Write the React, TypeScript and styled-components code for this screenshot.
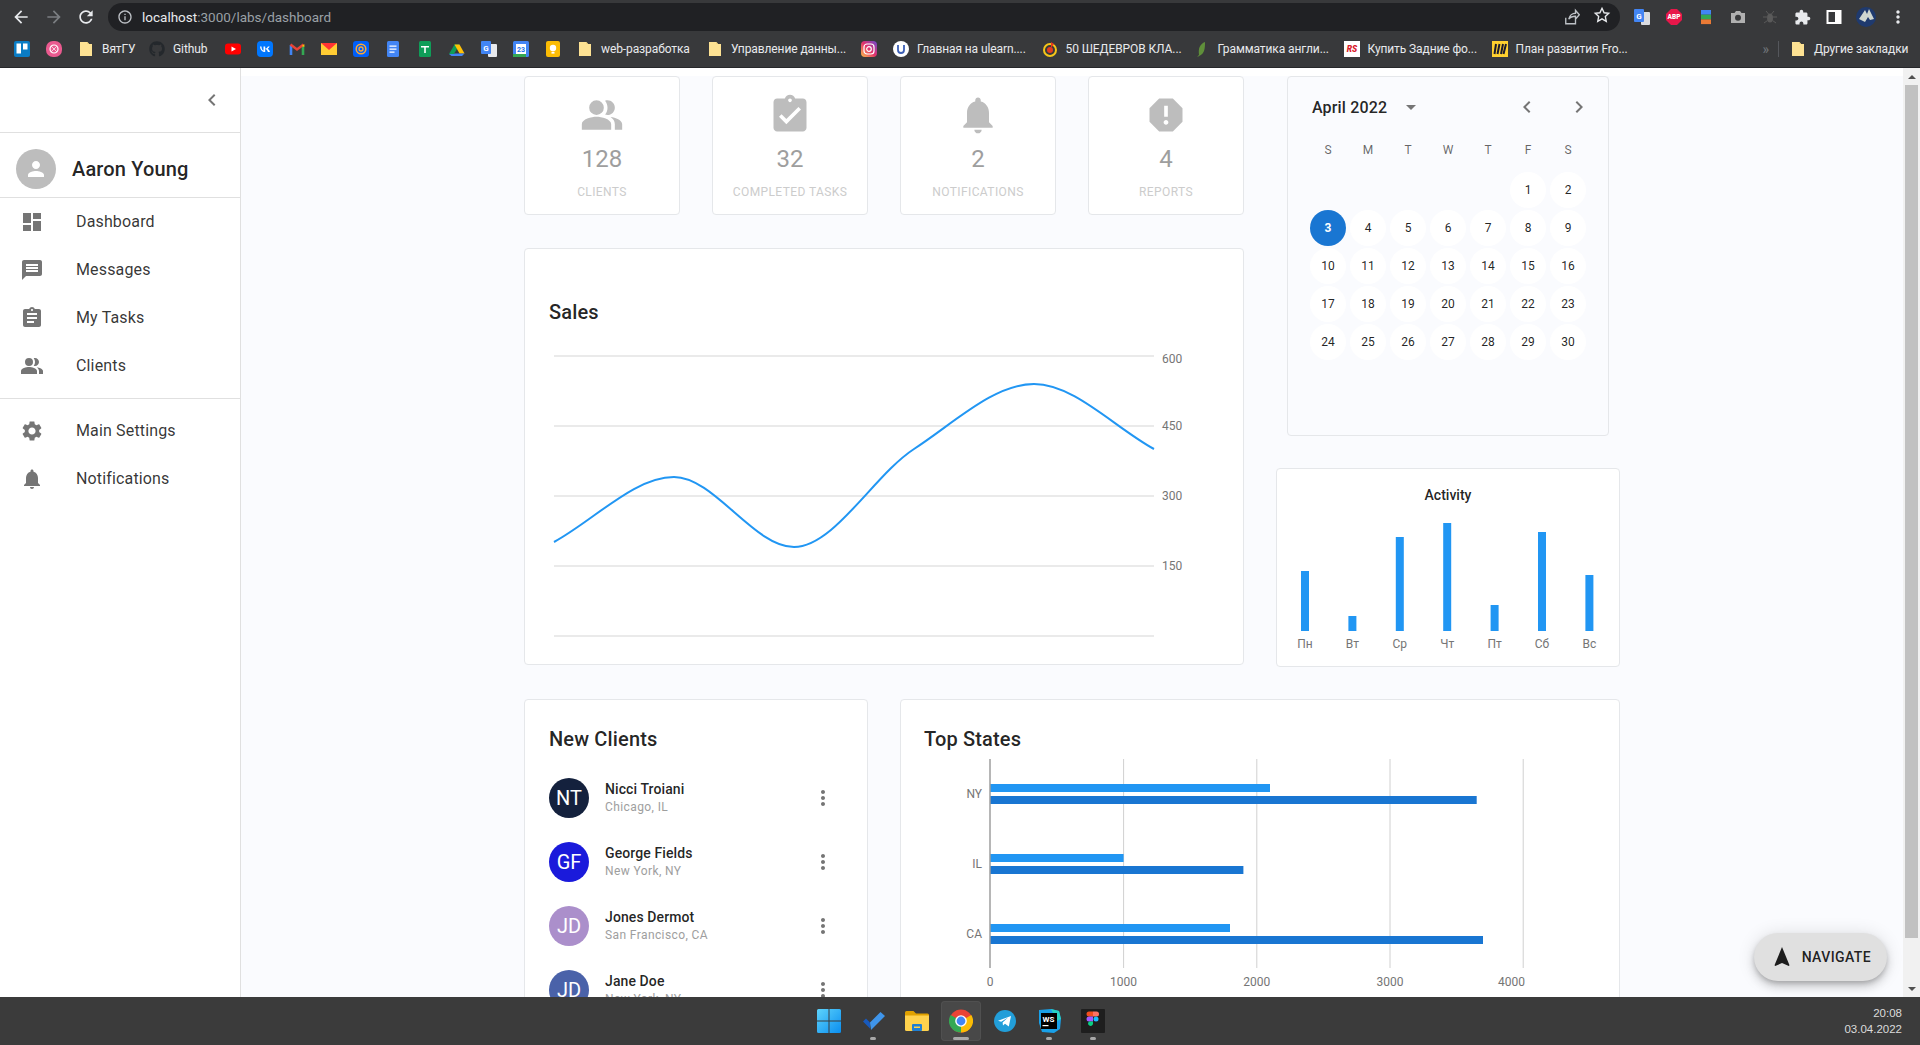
import React from 'react';
import styled, { createGlobalStyle } from 'styled-components';
import { FaGithub } from 'react-icons/fa';

const Global = createGlobalStyle`
  html, body { margin: 0; padding: 0; height: 100%; overflow: hidden; }
  body { font-family: Roboto, "Liberation Sans", sans-serif; color: rgba(0,0,0,.87); }
  #root { height: 100%; }
  * { box-sizing: border-box; }
`;

const P = {
  people: 'M16.67 13.13C18.04 14.06 19 15.32 19 17v3h4v-3c0-2.18-3.57-3.47-6.33-3.87zM9 4a4 4 0 1 0 0 8 4 4 0 0 0 0-8zM15 12c2.21 0 4-1.79 4-4s-1.79-4-4-4c-.47 0-.91.1-1.33.24C14.5 5.27 15 6.58 15 8s-.5 2.73-1.33 3.76c.42.14.86.24 1.33.24zM9 13c-2.67 0-8 1.34-8 4v3h16v-3c0-2.66-5.33-4-8-4z',
  assignment: 'M19 3h-4.18C14.4 1.84 13.3 1 12 1c-1.3 0-2.4.84-2.82 2H5c-1.1 0-2 .9-2 2v14c0 1.1.9 2 2 2h14c1.1 0 2-.9 2-2V5c0-1.1-.9-2-2-2zm-7 0c.55 0 1 .45 1 1s-.45 1-1 1-1-.45-1-1 .45-1 1-1zm2 14H7v-2h7v2zm3-4H7v-2h10v2zm0-4H7V7h10v2z',
  turnedIn: 'M19 3h-4.18C14.4 1.84 13.3 1 12 1c-1.3 0-2.4.84-2.82 2H5c-1.1 0-2 .9-2 2v14c0 1.1.9 2 2 2h14c1.1 0 2-.9 2-2V5c0-1.1-.9-2-2-2zm-7 0c.55 0 1 .45 1 1s-.45 1-1 1-1-.45-1-1 .45-1 1-1zm-2 14l-4-4 1.41-1.41L10 14.17l6.59-6.59L18 9l-8 8z',
  bell: 'M12 22c1.1 0 2-.9 2-2h-4c0 1.1.89 2 2 2zm6-6v-5c0-3.07-1.64-5.64-4.5-6.32V4c0-.83-.67-1.5-1.5-1.5s-1.5.67-1.5 1.5v.68C7.63 5.36 6 7.92 6 11v5l-2 2v1h16v-1l-2-2z',
  report: 'M15.73 3H8.27L3 8.27v7.46L8.27 21h7.46L21 15.73V8.27L15.73 3zM12 17.3c-.72 0-1.3-.58-1.3-1.3 0-.72.58-1.3 1.3-1.3.72 0 1.3.58 1.3 1.3 0 .72-.58 1.3-1.3 1.3zm1-4.3h-2V7h2v6z',
  dashboard: 'M3 13h8V3H3v10zm0 8h8v-6H3v6zm10 0h8V11h-8v10zm0-18v6h8V3h-8z',
  message: 'M20 2H4c-1.1 0-1.99.9-1.99 2L2 22l4-4h14c1.1 0 2-.9 2-2V4c0-1.1-.9-2-2-2zm-2 12H6v-2h12v2zm0-3H6V9h12v2zm0-3H6V6h12v2z',
  settings: 'M19.14 12.94c.04-.3.06-.61.06-.94 0-.32-.02-.64-.07-.94l2.03-1.58c.18-.14.23-.41.12-.61l-1.92-3.32c-.12-.22-.37-.29-.59-.22l-2.39.96c-.5-.38-1.03-.7-1.62-.94l-.36-2.54c-.04-.24-.24-.41-.48-.41h-3.84c-.24 0-.43.17-.47.41l-.36 2.54c-.59.24-1.13.57-1.62.94l-2.39-.96c-.22-.08-.47 0-.59.22L2.74 8.87c-.12.21-.08.47.12.61l2.03 1.58c-.05.3-.09.63-.09.94s.02.64.07.94l-2.03 1.58c-.18.14-.23.41-.12.61l1.92 3.32c.12.22.37.29.59.22l2.39-.96c.5.38 1.03.7 1.62.94l.36 2.54c.05.24.24.41.48.41h3.84c.24 0 .44-.17.47-.41l.36-2.54c.59-.24 1.13-.56 1.62-.94l2.39.96c.22.08.47 0 .59-.22l1.92-3.32c.12-.22.07-.47-.12-.61l-2.01-1.58zM12 15.6c-1.98 0-3.6-1.62-3.6-3.6s1.62-3.6 3.6-3.6 3.6 1.62 3.6 3.6-1.62 3.6-3.6 3.6z',
  navigation: 'M12 2L4.5 20.29l.71.71L12 18l6.79 3 .71-.71z',
  left: 'M15.41 7.41L14 6l-6 6 6 6 1.41-1.41L10.83 12z',
  right: 'M10 6L8.59 7.41 13.17 12l-4.58 4.59L10 18l6-6z',
  more: 'M12 8c1.1 0 2-.9 2-2s-.9-2-2-2-2 .9-2 2 .9 2 2 2zm0 2c-1.1 0-2 .9-2 2s.9 2 2 2 2-.9 2-2-.9-2-2-2zm0 6c-1.1 0-2 .9-2 2s.9 2 2 2 2-.9 2-2-.9-2-2-2z',
  person: 'M12 12c2.21 0 4-1.79 4-4s-1.79-4-4-4-4 1.79-4 4 1.79 4 4 4zm0 2c-2.67 0-8 1.34-8 4v2h16v-2c0-2.66-5.34-4-8-4z',
  drop: 'M7 10l5 5 5-5z',
  back: 'M20 11H7.83l5.59-5.59L12 4l-8 8 8 8 1.41-1.41L7.83 13H20v-2z',
  forward: 'M12 4l-1.41 1.41L16.17 11H4v2h12.17l-5.58 5.59L12 20l8-8z',
  reload: 'M17.65 6.35C16.2 4.9 14.21 4 12 4c-4.42 0-7.99 3.58-7.99 8s3.57 8 7.99 8c3.73 0 6.84-2.55 7.73-6h-2.08c-.82 2.33-3.04 4-5.65 4-3.31 0-6-2.69-6-6s2.69-6 6-6c1.66 0 3.14.69 4.22 1.78L13 11h7V4l-2.35 2.35z',
  info: 'M11 7h2v2h-2zm0 4h2v6h-2zm1-9C6.48 2 2 6.48 2 12s4.48 10 10 10 10-4.48 10-10S17.52 2 12 2zm0 18c-4.41 0-8-3.59-8-8s3.59-8 8-8 8 3.59 8 8-3.59 8-8 8z',
  puzzle: 'M20.5 11H19V7c0-1.1-.9-2-2-2h-4V3.5C13 2.12 11.88 1 10.5 1S8 2.12 8 3.5V5H4c-1.1 0-1.99.9-1.99 2v3.8H3.5c1.49 0 2.7 1.21 2.7 2.7s-1.21 2.7-2.7 2.7H2V20c0 1.1.9 2 2 2h3.8v-1.5c0-1.49 1.21-2.7 2.7-2.7 1.49 0 2.7 1.21 2.7 2.7V22H17c1.1 0 2-.9 2-2v-4h1.5c1.38 0 2.5-1.12 2.5-2.5S21.88 11 20.5 11z',
};

const IconSvg = styled.svg<{ $size: number; $color: string }>`
  width: ${p => p.$size}px;
  height: ${p => p.$size}px;
  fill: ${p => p.$color};
  flex: none;
  display: block;
`;
const Mi = ({ d, size = 24, color = '#757575' }: { d: string; size?: number; color?: string }) => (
  <IconSvg $size={size} $color={color} viewBox="0 0 24 24"><path d={d} /></IconSvg>
);
const Logo = styled.svg<{ $size?: number }>`
  width: ${p => p.$size ?? 16}px;
  height: ${p => p.$size ?? 16}px;
  flex: none;
  display: block;
`;

/* ---------- small logos ---------- */
const L = {
  trello: <Logo viewBox="0 0 16 16"><rect width="16" height="16" rx="2" fill="#0a7cc4" /><rect x="2.5" y="2.5" width="4.5" height="10" fill="#fff" /><rect x="9" y="2.5" width="4.5" height="6" fill="#fff" /></Logo>,
  pink: <Logo viewBox="0 0 16 16"><rect width="16" height="16" rx="7" fill="#ea5a8f" /><circle cx="8" cy="8" r="4" fill="none" stroke="#fff" strokeWidth="1.2" /><path d="M5 5l6 6M11 5l-6 6" stroke="#fff" strokeWidth=".7" /></Logo>,
  folder: <Logo viewBox="0 0 16 16"><path d="M2 1h7.500L11 3h3v12H2z" fill="#fde293" /><path d="M9.500 1L11 3H9.500z" fill="#e5c76b" /></Logo>,
  github: <FaGithub size={16} color="#24282c" style={{ flex: 'none' }} />,
  youtube: <Logo viewBox="0 0 16 16"><rect y="2.500" width="16" height="11" rx="3" fill="#f00" /><path d="M6.500 5.500v5L11 8z" fill="#fff" /></Logo>,
  vk: <Logo viewBox="0 0 16 16"><rect width="16" height="16" rx="4" fill="#07f" /><path d="M3 5.500c.2 3.500 2 5.500 5.200 5.500V8c1.300.2 2.200 1.300 2.700 3H13c-.5-1.800-1.500-2.800-2.300-3.300.7-.5 1.500-1.300 2-2.200h-1.800c-.4 1-1.500 2-2.700 2.200V5.500H6.500v4.200C5.500 9.500 4.600 8 4.500 5.500z" fill="#fff" /></Logo>,
  gmail: <Logo viewBox="0 0 16 16"><path d="M2 14V4" stroke="#4285f4" strokeWidth="2.600" /><path d="M14 14V4" stroke="#34a853" strokeWidth="2.600" /><path d="M1.500 3.500L8 8.500l6.500-5" fill="none" stroke="#ea4335" strokeWidth="2.400" /><path d="M12.700 5l2.600-2v3z" fill="#fbbc04" /></Logo>,
  ymail: <Logo viewBox="0 0 16 16"><rect y="2" width="16" height="12" fill="#fc3" /><path d="M0 2h16L8 9z" fill="#f33" /></Logo>,
  at: <Logo viewBox="0 0 16 16"><rect width="16" height="16" rx="3" fill="#005ff9" /><circle cx="8" cy="8" r="4.800" fill="none" stroke="#ffa930" strokeWidth="1.500" /><circle cx="8" cy="8" r="2" fill="none" stroke="#ffa930" strokeWidth="1.300" /></Logo>,
  docs: <Logo viewBox="0 0 16 16"><rect x="2" width="12" height="16" rx="1.500" fill="#4285f4" /><path d="M4.500 4.500h7v1.200h-7zM4.500 7.500h7v1.200h-7zM4.500 10.500h5v1.200h-5z" fill="#fff" /></Logo>,
  sheets: <Logo viewBox="0 0 16 16"><rect x="2" width="12" height="16" rx="1.500" fill="#0f9d58" /><path d="M4 5h8v1.500H8.800V12H7.200V6.500H4z" fill="#fff" /></Logo>,
  drive: <Logo viewBox="0 0 16 16"><path d="M5.500 1.500h5L5 11H0z" fill="#0f9d58" transform="translate(0 2)" /><path d="M5.500 1.500h5l5 9h-5z" fill="#ffc107" transform="translate(0 2)" /><path d="M0 13h5l.5-.5h10l-2.500 2.500H2.500z" fill="#4285f4" /></Logo>,
  translate: <Logo viewBox="0 0 16 16"><rect x="7" y="3" width="9" height="13" rx="1" fill="#e8eaed" /><rect width="10" height="13" rx="1" fill="#4285f4" /><text x="5" y="9.500" fontSize="8" fontWeight="700" textAnchor="middle" fill="#fff" fontFamily="Roboto">G</text></Logo>,
  cal: <Logo viewBox="0 0 16 16"><rect width="16" height="16" rx="1.500" fill="#4285f4" /><rect x="3" y="3" width="10" height="10" fill="#fff" /><rect y="13" width="13" height="3" fill="#34a853" /><text x="8" y="11" fontSize="7" fontWeight="700" textAnchor="middle" fill="#1a73e8" fontFamily="Roboto">23</text></Logo>,
  keep: <Logo viewBox="0 0 16 16"><rect x="1" width="14" height="16" rx="2" fill="#fbbc04" /><circle cx="8" cy="7" r="3.200" fill="#fff" /><rect x="6.500" y="10.800" width="3" height="1.800" fill="#fff" /></Logo>,
  insta: <Logo viewBox="0 0 16 16"><defs><linearGradient id="ig" x1="0" y1="1" x2="1" y2="0"><stop offset="0" stopColor="#fdc14a" /><stop offset=".5" stopColor="#e1306c" /><stop offset="1" stopColor="#6a4bd1" /></linearGradient></defs><rect width="16" height="16" rx="4" fill="url(#ig)" /><rect x="3" y="3" width="10" height="10" rx="3" fill="none" stroke="#fff" strokeWidth="1.200" /><circle cx="8" cy="8" r="2.300" fill="none" stroke="#fff" strokeWidth="1.200" /></Logo>,
  ulearn: <Logo viewBox="0 0 16 16"><circle cx="8" cy="8" r="8" fill="#fff" /><path d="M5 4v5a3 3 0 0 0 6 0V4" fill="none" stroke="#3c5fb5" strokeWidth="1.800" /></Logo>,
  fifty: <Logo viewBox="0 0 16 16"><circle cx="8" cy="9" r="6" fill="none" stroke="#f5c518" strokeWidth="2" /><circle cx="8" cy="9" r="3" fill="#e53a1e" /><path d="M9 1l3 2-3 4z" fill="#e53a1e" /></Logo>,
  leaf: <Logo viewBox="0 0 16 16"><path d="M11 1C6 3 4 7 5 14c-1 .8-1.500 1.300-1.500 2 2-1.500 5-2 6.500-6 1-3 1-6 1-9z" fill="#5f8f3a" /></Logo>,
  rs: <Logo viewBox="0 0 16 16"><rect width="16" height="16" fill="#fff" /><text x="8" y="11" fontSize="8.500" fontWeight="900" fontStyle="italic" textAnchor="middle" fill="#d9192a" fontFamily="Roboto">RS</text></Logo>,
  miro: <Logo viewBox="0 0 16 16"><rect width="16" height="16" fill="#ffd02f" /><path d="M4 3L2.500 13M7.500 3L5.500 13M11 3L9 13M14 3l-2.500 10" stroke="#1a1a2e" strokeWidth="2" /></Logo>,
};

const E = {
  translate: <Logo viewBox="0 0 16 16"><rect x="7" y="3" width="9" height="13" rx="1" fill="#dadce0" /><rect width="10" height="13" rx="1" fill="#4285f4" /><text x="5" y="9.500" fontSize="8" fontWeight="700" textAnchor="middle" fill="#fff" fontFamily="Roboto">G</text></Logo>,
  abp: <Logo viewBox="0 0 16 16"><path d="M5 0h6l5 5v6l-5 5H5l-5-5V5z" fill="#e8174a" /><text x="8" y="10.300" fontSize="6.500" fontWeight="900" textAnchor="middle" fill="#fff" fontFamily="Roboto">ABP</text></Logo>,
  color: <Logo viewBox="0 0 16 16"><rect x="3" y="1" width="10" height="4.700" fill="#4285f4" /><rect x="3" y="5.700" width="10" height="4.700" fill="#34a853" /><rect x="3" y="10.400" width="10" height="4.700" fill="#ea7a35" /></Logo>,
  camera: <Logo viewBox="0 0 16 16"><path d="M1 4h3.500L6 2h4l1.500 2H15v10H1z" fill="#b0b0b0" /><circle cx="8" cy="8.700" r="3" fill="#38393b" /></Logo>,
  bug: <Logo viewBox="0 0 16 16"><ellipse cx="8" cy="9" rx="3" ry="4.500" fill="#5a5a5a" /><path d="M4 2l2.500 3M12 2L9.500 5M1 8h4M11 8h4M2 14l3.500-2.500M14 14l-3.500-2.500" stroke="#5a5a5a" fill="none" /></Logo>,
  panel: <Logo viewBox="0 0 16 16"><rect x="1.500" y="2" width="13" height="12" fill="none" stroke="#fff" strokeWidth="2" /><rect x="9" y="2" width="5" height="12" fill="#fff" /></Logo>,
  avatar: <Logo $size={20} viewBox="0 0 20 20"><defs><clipPath id="av"><circle cx="10" cy="10" r="10" /></clipPath></defs><g clipPath="url(#av)"><rect width="20" height="20" fill="#1f3a6e" /><path d="M3 12L9 3l2 4 2-5 5 10-4 1-2-3-3 5z" fill="#cfd6cf" /></g></Logo>,
};

/* ---------- browser chrome ---------- */
const Chrome = styled.header`
  background: #38393b;
  flex: none;
  height: 68px;
  border-bottom: 1px solid #26272a;
`;
const Toolbar = styled.div`
  height: 33px;
  padding: 3px 6px 2px 5px;
  display: flex;
  align-items: center;
`;
const NavBtn = styled.div<{ $gap?: number }>`
  width: 32px;
  height: 28px;
  margin-right: ${p => p.$gap ?? 0}px;
  display: flex;
  align-items: center;
  justify-content: center;
  flex: none;
`;
const UrlPill = styled.div`
  flex: 1;
  height: 28px;
  background: #202124;
  border-radius: 14px;
  display: flex;
  align-items: center;
  padding: 0 9px 0 9px;
  margin: 0 6px 0 0;
`;
const UrlText = styled.span`
  margin-left: 9px;
  font-size: 13.5px;
  color: #9aa0a6;
  flex: 1;
  b { font-weight: 400; color: #e8eaed; }
`;
const PillIcon = styled.div`
  margin-left: 13px;
`;
const BookmarkBar = styled.div`
  height: 34px;
  padding: 0 7px 2px 6px;
  display: flex;
  align-items: center;
`;
const Bm = styled.div`
  display: flex;
  align-items: center;
  gap: 8px;
  padding: 0 8px;
  flex: none;
`;
const BmLabel = styled.span<{ $w: number }>`
  width: ${p => p.$w}px;
  font-size: 12px;
  letter-spacing: -.1px;
  color: #e8eaed;
  white-space: nowrap;
`;
const BmRight = styled.div`
  margin-left: auto;
  display: flex;
  align-items: center;
`;
const Overflow = styled.span`
  color: #70757a;
  font-size: 14px;
  margin-right: 9px;
`;
const BmSep = styled.div`
  width: 1px;
  height: 16px;
  background: #55575c;
  margin-right: 3px;
`;

const bookmarks: { icon: React.ReactNode; label?: string; w?: number }[] = [
  { icon: L.trello }, { icon: L.pink }, { icon: L.folder, label: 'ВятГУ', w: 31 },
  { icon: L.github, label: 'Github', w: 36 }, { icon: L.youtube }, { icon: L.vk }, { icon: L.gmail },
  { icon: L.ymail }, { icon: L.at }, { icon: L.docs }, { icon: L.sheets }, { icon: L.drive },
  { icon: L.translate }, { icon: L.cal }, { icon: L.keep },
  { icon: L.folder, label: 'web-разработка', w: 90 },
  { icon: L.folder, label: 'Управление данны...', w: 114 },
  { icon: L.insta }, { icon: L.ulearn, label: 'Главная на ulearn....', w: 108.5 },
  { icon: L.fifty, label: '50 ШЕДЕВРОВ КЛА...', w: 112 },
  { icon: L.leaf, label: 'Грамматика англи...', w: 110 },
  { icon: L.rs, label: 'Купить Задние фо...', w: 108 },
  { icon: L.miro, label: 'План развития Fro...', w: 110 },
];

/* ---------- layout ---------- */
const Window = styled.div`
  width: 100vw;
  height: 100vh;
  display: flex;
  flex-direction: column;
  overflow: hidden;
`;
const Body = styled.div`
  flex: 1;
  min-height: 0;
  display: flex;
  position: relative;
  background: #fff;
`;
const Sidebar = styled.aside`
  width: 241px;
  flex: none;
  background: #fff;
  border-right: 1px solid #e0e0e0;
`;
const CollapseRow = styled.div`
  height: 65px;
  border-bottom: 1px solid #e0e0e0;
  display: flex;
  align-items: flex-start;
  justify-content: flex-end;
  padding: 20px 16px 0 0;
`;
const Profile = styled.div`
  height: 65px;
  border-bottom: 1px solid #e0e0e0;
  padding: 16px 16px 8px;
  display: flex;
  align-items: center;
  gap: 16px;
`;
const UserAvatar = styled.div`
  width: 40px;
  height: 40px;
  border-radius: 50%;
  background: #bdbdbd;
  display: flex;
  align-items: center;
  justify-content: center;
`;
const UserName = styled.span`
  font-size: 20px;
  font-weight: 500;
  letter-spacing: .15px;
`;
const MenuGroup = styled.nav<{ $first?: boolean }>`
  padding: ${p => (p.$first ? '0 0 8px' : '8px 0')};
  border-bottom: ${p => (p.$first ? '1px solid #e0e0e0' : 'none')};
`;
const MenuItem = styled.div`
  height: 48px;
  padding: 0 0 0 20px;
  display: flex;
  align-items: center;
  gap: 32px;
  font-size: 16px;
  letter-spacing: .15px;
  color: rgba(0,0,0,.8);
`;
const MenuLabel = styled.span`
  margin-bottom: 2px;
`;
const Main = styled.main`
  flex: 1;
  min-width: 0;
  overflow: hidden;
  background: #fafbfe;
`;
const TopBand = styled.div`
  height: 8px;
  background: #fff;
`;
const Content = styled.div`
  width: 1096px;
  margin: 0 auto;
`;
const TopGrid = styled.div`
  display: grid;
  grid-template-columns: 720px 344px;
  column-gap: 32px;
`;
const BottomGrid = styled.div`
  display: grid;
  grid-template-columns: 344px 720px;
  column-gap: 32px;
  margin-top: 32px;
`;
const LeftCol = styled.div``;
const RightCol = styled.div`
  display: flex;
  flex-direction: column;
  align-items: center;
  gap: 32px;
`;
const Card = styled.section`
  background: #fff;
  border: 1px solid #e5e7ea;
  border-radius: 4px;
`;
const StatRow = styled.div`
  display: grid;
  grid-template-columns: repeat(4, 1fr);
  gap: 32px;
  margin-bottom: 33px;
`;
const StatCard = styled(Card)`
  height: 139px;
  padding-top: 16px;
  display: flex;
  flex-direction: column;
  align-items: center;
`;
const StatValue = styled.div`
  margin-top: 8px;
  font-size: 24px;
  line-height: 28px;
  color: #9e9e9e;
`;
const StatLabel = styled.div`
  margin-top: 10px;
  font-size: 12px;
  line-height: 18px;
  color: #ccc;
  letter-spacing: .4px;
  text-transform: uppercase;
`;
const CardTitle = styled.h2`
  margin: 0;
  font-size: 20px;
  line-height: 24px;
  font-weight: 500;
  letter-spacing: .15px;
`;
const SalesCard = styled(Card)`
  height: 417px;
  padding: 51px 0 0 24px;
`;
const ChartSvg = styled.svg<{ $w: number; $h: number; $mt?: number }>`
  display: block;
  width: ${p => p.$w}px;
  height: ${p => p.$h}px;
  margin-top: ${p => p.$mt ?? 0}px;
  font-family: Roboto, sans-serif;
  font-size: 12px;
  text { fill: #757575; }
`;

/* ---------- calendar ---------- */
const CalendarCard = styled.section`
  width: 322px;
  height: 360px;
  border: 1px solid #e5e7ea;
  border-radius: 4px;
  padding: 15px 20px 0;
`;
const CalHeader = styled.div`
  height: 30px;
  display: flex;
  align-items: center;
  padding-left: 4px;
`;
const MonthLabel = styled.span`
  font-size: 16px;
  font-weight: 500;
  letter-spacing: .15px;
  width: 76px;
  white-space: nowrap;
  margin-right: 11px;
`;
const CalNav = styled.div`
  margin-left: auto;
  margin-right: -3px;
  display: flex;
  gap: 28px;
`;
const CalGrid = styled.div<{ $rows?: boolean }>`
  display: grid;
  grid-template-columns: repeat(7, 40px);
  margin-top: ${p => (p.$rows ? 9 : 16)}px;
  grid-auto-rows: ${p => (p.$rows ? 38 : 24)}px;
`;
const WeekDay = styled.div`
  display: flex;
  align-items: center;
  justify-content: center;
  font-size: 12px;
  color: rgba(0,0,0,.6);
`;
const DayCell = styled.div<{ $sel?: boolean }>`
  width: 36px;
  height: 36px;
  margin: 1px 2px;
  border-radius: 50%;
  display: flex;
  align-items: center;
  justify-content: center;
  font-size: 12px;
  background: ${p => (p.$sel ? '#1976d2' : '#fff')};
  color: ${p => (p.$sel ? '#fff' : 'rgba(0,0,0,.87)')};
  font-weight: ${p => (p.$sel ? 700 : 400)};
`;

/* ---------- activity ---------- */
const ActivityCard = styled(Card)`
  width: 344px;
  height: 199px;
  padding-top: 18px;
`;
const ActivityTitle = styled.h3`
  margin: 0 0 7px;
  font-size: 14px;
  line-height: 16px;
  font-weight: 500;
  text-align: center;
`;

/* ---------- clients ---------- */
const ClientsCard = styled(Card)`
  height: 340px;
  padding: 27px 32px 0 24px;
`;
const ClientList = styled.div`
  margin-top: 15px;
`;
const ClientRow = styled.div`
  height: 64px;
  display: flex;
  align-items: center;
`;
const ClientAvatar = styled.div<{ $bg: string }>`
  width: 40px;
  height: 40px;
  border-radius: 50%;
  background: ${p => p.$bg};
  color: #fff;
  font-size: 20px;
  display: flex;
  align-items: center;
  justify-content: center;
  flex: none;
`;
const ClientText = styled.div`
  margin: 0 0 3px 16px;
  flex: 1;
`;
const ClientName = styled.div`
  font-size: 14px;
  line-height: 20px;
  font-weight: 500;
  letter-spacing: .1px;
`;
const ClientCity = styled.div`
  font-size: 12px;
  line-height: 16px;
  letter-spacing: .4px;
  color: #9e9e9e;
`;
const StatesCard = styled(Card)`
  height: 340px;
  padding: 27px 0 0 23px;
`;

/* ---------- scrollbar + fab ---------- */
const Scrollbar = styled.div`
  width: 17px;
  flex: none;
  background: #f1f1f1;
  display: flex;
  flex-direction: column;
`;
const ScrollArrow = styled.div<{ $up?: boolean }>`
  height: 17px;
  display: flex;
  align-items: center;
  justify-content: center;
  flex: none;
  &::before {
    content: '';
    border-left: 4px solid transparent;
    border-right: 4px solid transparent;
    ${p => (p.$up ? 'border-bottom: 4px solid #505050;' : 'border-top: 4px solid #505050;')}
  }
`;
const ScrollThumb = styled.div`
  height: 853px;
  margin: 0 2px;
  background: #c1c1c1;
  flex: none;
`;
const ScrollTrack = styled.div`
  flex: 1;
`;
const Fab = styled.button`
  position: absolute;
  right: 33px;
  bottom: 16px;
  height: 48px;
  border: 0;
  border-radius: 24px;
  background: #e0e0e0;
  padding: 0 16px;
  display: flex;
  align-items: center;
  gap: 8px;
  font-family: Roboto, sans-serif;
  font-size: 14px;
  font-weight: 500;
  letter-spacing: .4px;
  color: rgba(0,0,0,.87);
  box-shadow: 0 3px 5px -1px rgba(0,0,0,.2), 0 6px 10px 0 rgba(0,0,0,.14), 0 1px 18px 0 rgba(0,0,0,.12);
`;

/* ---------- taskbar ---------- */
const Taskbar = styled.footer`
  height: 48px;
  flex: none;
  background: #3b3b3b;
  display: grid;
  grid-template-columns: 1fr auto 1fr;
  align-items: center;
`;
const TaskApps = styled.div`
  grid-column: 2;
  display: flex;
  gap: 4px;
  padding-left: 1px;
`;
const TaskApp = styled.div<{ $active?: boolean }>`
  width: 40px;
  height: 40px;
  border-radius: 4px;
  position: relative;
  display: flex;
  align-items: center;
  justify-content: center;
  background: ${p => (p.$active ? '#484848' : 'transparent')};
  box-shadow: ${p => (p.$active ? 'inset 0 0 0 1px #505050' : 'none')};
`;
const TaskDot = styled.span<{ $wide?: boolean }>`
  position: absolute;
  bottom: 1px;
  left: 50%;
  transform: translateX(-50%);
  width: ${p => (p.$wide ? 16 : 6)}px;
  height: 3px;
  border-radius: 2px;
  background: #a8a8a8;
`;
const Clock = styled.div`
  justify-self: end;
  padding-right: 18px;
  font-family: "Liberation Sans", sans-serif;
  font-size: 11.5px;
  line-height: 16px;
  text-align: right;
  color: #dcdcdc;
`;

const T = {
  windows: <Logo $size={24} viewBox="0 0 24 24"><defs><linearGradient id="win" x1="0" y1="0" x2="1" y2="1"><stop offset="0" stopColor="#5ed3fb" /><stop offset="1" stopColor="#0a8ef0" /></linearGradient></defs><path d="M0 1.500A1.500 1.500 0 0 1 1.500 0h10v11.500H0zM12.500 0h10A1.500 1.500 0 0 1 24 1.500v10H12.500zM0 12.500h11.500V24h-10A1.500 1.500 0 0 1 0 22.500zM12.500 12.500H24v10a1.500 1.500 0 0 1-1.500 1.500h-10z" fill="url(#win)" /></Logo>,
  todo: <Logo $size={24} viewBox="0 0 24 24"><path d="M9 19.500L2 12.500l3-3 4 4z" fill="#185abd" /><path d="M9 13.500L19.500 3 24 7 10 21z" fill="#3f95ea" /></Logo>,
  folder: <Logo $size={24} viewBox="0 0 24 24"><path d="M0 3.500A1.500 1.500 0 0 1 1.500 2h7L11 4.500h11.500A1.500 1.500 0 0 1 24 6v4H0z" fill="#e0a100" /><path d="M0 6.500h24v14A1.500 1.500 0 0 1 22.500 22h-21A1.500 1.500 0 0 1 0 20.500z" fill="#ffd24d" /><rect x="7" y="15" width="10" height="7" rx="1" fill="#1f7fd4" /><rect x="9" y="17.500" width="6" height="1.500" fill="#ffd24d" /></Logo>,
  chrome: <Logo $size={24} viewBox="0 0 24 24"><circle cx="12" cy="12" r="11.500" fill="#ea4335" /><path d="M12 12L22.300 6A11.500 11.500 0 0 1 12 23.500z" fill="#fbbc04" /><path d="M12 12L12 23.500A11.500 11.500 0 0 1 1.700 6z" fill="#34a853" /><circle cx="12" cy="12" r="5.800" fill="#fff" /><circle cx="12" cy="12" r="4.400" fill="#4285f4" /></Logo>,
  telegram: <Logo $size={24} viewBox="0 0 24 24"><circle cx="12" cy="12" r="11" fill="#229ed9" /><path d="M5 11.800L18 7l-2.200 10.500-3.800-2.800-2 1.900-.4-3.200 5.400-4.800-6.800 4.200z" fill="#fff" /></Logo>,
  ws: <Logo $size={24} viewBox="0 0 24 24"><path d="M2 1l12-1 8 2 2 8-1 10-6 4-12-1-3-9z" fill="#19a0e8" /><path d="M14 0l8 2 2 8-4 2z" fill="#27d3c3" /><rect x="4" y="4" width="16" height="16" fill="#000" /><text x="5.500" y="12.500" fontSize="8" fontWeight="700" fill="#fff" fontFamily="Roboto">WS</text><rect x="5.500" y="16" width="6" height="1.200" fill="#fff" /></Logo>,
  figma: <Logo $size={24} viewBox="0 0 24 24"><rect width="24" height="24" rx="1" fill="#1e1e1e" /><path d="M8 2.500h4v5H8a2.500 2.500 0 0 1 0-5z" fill="#f24e1e" /><path d="M12 2.500h3.500a2.500 2.500 0 0 1 0 5H12z" fill="#ff7262" /><path d="M8 7.500h4v5H8a2.500 2.500 0 0 1 0-5z" fill="#a259ff" /><circle cx="15" cy="10" r="2.500" fill="#1abcfe" /><path d="M8 12.500h4V15a2.500 2.500 0 1 1-4-2.500z" fill="#0acf83" /></Logo>,
};

const stats = [
  { icon: P.people, value: '128', label: 'Clients' },
  { icon: P.turnedIn, value: '32', label: 'Completed Tasks' },
  { icon: P.bell, value: '2', label: 'Notifications' },
  { icon: P.report, value: '4', label: 'Reports' },
];
const clients = [
  { ini: 'NT', bg: '#14213d', name: 'Nicci Troiani', city: 'Chicago, IL' },
  { ini: 'GF', bg: '#1a1adb', name: 'George Fields', city: 'New York, NY' },
  { ini: 'JD', bg: '#ab8fcb', name: 'Jones Dermot', city: 'San Francisco, CA' },
  { ini: 'JD', bg: '#4a62a9', name: 'Jane Doe', city: 'New York, NY' },
];
const activity = [
  { x: 1305, h: 60, t: 'Пн' }, { x: 1352.4, h: 15, t: 'Вт' }, { x: 1399.8, h: 94, t: 'Ср' },
  { x: 1447.2, h: 108, t: 'Чт' }, { x: 1494.6, h: 26, t: 'Пт' }, { x: 1542, h: 99, t: 'Сб' },
  { x: 1589.4, h: 56, t: 'Вс' },
];
const states = [
  { t: 'NY', y: 784, a: 1270, b: 1476.7 },
  { t: 'IL', y: 854, a: 1123.6, b: 1243.4 },
  { t: 'CA', y: 924, a: 1230, b: 1483 },
];
const days: (number | null)[] = [null, null, null, null, null, ...Array.from({ length: 30 }, (_, i) => i + 1)];

export default function App() {
  return (
    <Window>
      <Global />
      <Chrome>
        <Toolbar>
          <NavBtn $gap={1}><Mi d={P.back} size={20} color="#e8eaed" /></NavBtn>
          <NavBtn $gap={0}><Mi d={P.forward} size={20} color="#7b7e82" /></NavBtn>
          <NavBtn $gap={6}><Mi d={P.reload} size={20} color="#e8eaed" /></NavBtn>
          <UrlPill>
            <Mi d={P.info} size={16} color="#bdc1c6" />
            <UrlText><b>localhost</b>:3000/labs/dashboard</UrlText>
            <svg width="18" height="18" viewBox="0 0 24 24" fill="none" stroke="#bdc1c6" strokeWidth="1.800"><path d="M5 13v8h13v-6M9 15c1-5 5-8 9-8V3l5 6-5 6v-4c-4 0-7 1-9 4z" /></svg>
            <PillIcon><svg width="18" height="18" viewBox="0 0 24 24" fill="none" stroke="#e8eaed" strokeWidth="1.800"><path d="M12 3l2.800 6 6.200.7-4.600 4.300 1.300 6.500L12 17.200l-5.700 3.300 1.300-6.500L3 9.700 9.200 9z" /></svg></PillIcon>
          </UrlPill>
          <NavBtn>{E.translate}</NavBtn>
          <NavBtn>{E.abp}</NavBtn>
          <NavBtn>{E.color}</NavBtn>
          <NavBtn>{E.camera}</NavBtn>
          <NavBtn>{E.bug}</NavBtn>
          <NavBtn><Mi d={P.puzzle} size={17} color="#e8eaed" /></NavBtn>
          <NavBtn>{E.panel}</NavBtn>
          <NavBtn>{E.avatar}</NavBtn>
          <NavBtn><Mi d={P.more} size={20} color="#e8eaed" /></NavBtn>
        </Toolbar>
        <BookmarkBar>
          {bookmarks.map((b, i) => (
            <Bm key={i}>
              {b.icon}
              {b.label && <BmLabel $w={b.w!}>{b.label}</BmLabel>}
            </Bm>
          ))}
          <BmRight>
            <Overflow>»</Overflow>
            <BmSep />
            <Bm>{L.folder}<BmLabel $w={91}>Другие закладки</BmLabel></Bm>
          </BmRight>
        </BookmarkBar>
      </Chrome>

      <Body>
        <Sidebar>
          <CollapseRow><Mi d={P.left} /></CollapseRow>
          <Profile>
            <UserAvatar><Mi d={P.person} color="#fff" /></UserAvatar>
            <UserName>Aaron Young</UserName>
          </Profile>
          <MenuGroup $first>
            <MenuItem><Mi d={P.dashboard} /><MenuLabel>Dashboard</MenuLabel></MenuItem>
            <MenuItem><Mi d={P.message} /><MenuLabel>Messages</MenuLabel></MenuItem>
            <MenuItem><Mi d={P.assignment} /><MenuLabel>My Tasks</MenuLabel></MenuItem>
            <MenuItem><Mi d={P.people} /><MenuLabel>Clients</MenuLabel></MenuItem>
          </MenuGroup>
          <MenuGroup>
            <MenuItem><Mi d={P.settings} /><MenuLabel>Main Settings</MenuLabel></MenuItem>
            <MenuItem><Mi d={P.bell} /><MenuLabel>Notifications</MenuLabel></MenuItem>
          </MenuGroup>
        </Sidebar>

        <Main>
          <TopBand />
          <Content>
            <TopGrid>
              <LeftCol>
                <StatRow>
                  {stats.map(s => (
                    <StatCard key={s.label}>
                      <Mi d={s.icon} size={44} color="#bdbdbd" />
                      <StatValue>{s.value}</StatValue>
                      <StatLabel>{s.label}</StatLabel>
                    </StatCard>
                  ))}
                </StatRow>
                <SalesCard>
                  <CardTitle>Sales</CardTitle>
                  <ChartSvg $w={672} $h={320} $mt={16} viewBox="549 340 672 320">
                    {[356, 426, 496, 566, 636].map(y => (
                      <line key={y} x1="554" x2="1154" y1={y} y2={y} stroke="#e3e3e3" strokeWidth="1.500" />
                    ))}
                    <text x="1162" y="363">600</text>
                    <text x="1162" y="430">450</text>
                    <text x="1162" y="500">300</text>
                    <text x="1162" y="570">150</text>
                    <path d="M554 542C594 520.300 634 477 674 477C714 477 754 547 794 547C834 547 874 475 914 449C954 423 994 384 1034 384C1074 384 1114 427 1154 449" fill="none" stroke="#2196f3" strokeWidth="2" />
                  </ChartSvg>
                </SalesCard>
              </LeftCol>
              <RightCol>
                <CalendarCard>
                  <CalHeader>
                    <MonthLabel>April 2022</MonthLabel>
                    <Mi d={P.drop} />
                    <CalNav>
                      <Mi d={P.left} />
                      <Mi d={P.right} />
                    </CalNav>
                  </CalHeader>
                  <CalGrid>
                    {['S', 'M', 'T', 'W', 'T', 'F', 'S'].map((d, i) => <WeekDay key={i}>{d}</WeekDay>)}
                  </CalGrid>
                  <CalGrid $rows>
                    {days.map((d, i) => (d === null ? <span key={i} /> : <DayCell key={i} $sel={d === 3}>{d}</DayCell>))}
                  </CalGrid>
                </CalendarCard>
                <ActivityCard>
                  <ActivityTitle>Activity</ActivityTitle>
                  <ChartSvg $w={342} $h={150} viewBox="1277 510 342 150">
                    {activity.map(b => (
                      <g key={b.t}>
                        <rect x={b.x - 4} y={631 - b.h} width="8" height={b.h} fill="#2196f3" />
                        <text x={b.x} y="648" textAnchor="middle">{b.t}</text>
                      </g>
                    ))}
                  </ChartSvg>
                </ActivityCard>
              </RightCol>
            </TopGrid>
            <BottomGrid>
              <ClientsCard>
                <CardTitle>New Clients</CardTitle>
                <ClientList>
                  {clients.map(c => (
                    <ClientRow key={c.name}>
                      <ClientAvatar $bg={c.bg}>{c.ini}</ClientAvatar>
                      <ClientText>
                        <ClientName>{c.name}</ClientName>
                        <ClientCity>{c.city}</ClientCity>
                      </ClientText>
                      <Mi d={P.more} />
                    </ClientRow>
                  ))}
                </ClientList>
              </ClientsCard>
              <StatesCard>
                <CardTitle>Top States</CardTitle>
                <ChartSvg $w={672} $h={240} $mt={4} viewBox="924 755 672 240">
                  {[1123.6, 1256.8, 1390, 1523.2].map(x => (
                    <line key={x} x1={x} x2={x} y1="759" y2="968" stroke="#d0d0d0" />
                  ))}
                  {states.map(s => (
                    <g key={s.t}>
                      <rect x="990" y={s.y} width={s.a - 990} height="8" fill="#2196f3" />
                      <rect x="990" y={s.y + 12} width={s.b - 990} height="8" fill="#1976d2" />
                      <text x="982" y={s.y + 14} textAnchor="end">{s.t}</text>
                    </g>
                  ))}
                  <line x1="990" x2="990" y1="759" y2="968" stroke="#9e9e9e" strokeWidth="1.500" />
                  <text x="990" y="986" textAnchor="middle">0</text>
                  <text x="1123.6" y="986" textAnchor="middle">1000</text>
                  <text x="1256.8" y="986" textAnchor="middle">2000</text>
                  <text x="1390" y="986" textAnchor="middle">3000</text>
                  <text x="1525" y="986" textAnchor="end">4000</text>
                </ChartSvg>
              </StatesCard>
            </BottomGrid>
          </Content>
        </Main>

        <Scrollbar>
          <ScrollArrow $up />
          <ScrollThumb />
          <ScrollTrack />
          <ScrollArrow />
        </Scrollbar>

        <Fab><Mi d={P.navigation} color="rgba(0,0,0,.87)" />NAVIGATE</Fab>
      </Body>

      <Taskbar>
        <TaskApps>
          <TaskApp>{T.windows}</TaskApp>
          <TaskApp>{T.todo}<TaskDot /></TaskApp>
          <TaskApp>{T.folder}</TaskApp>
          <TaskApp $active>{T.chrome}<TaskDot $wide /></TaskApp>
          <TaskApp>{T.telegram}</TaskApp>
          <TaskApp>{T.ws}<TaskDot /></TaskApp>
          <TaskApp>{T.figma}<TaskDot /></TaskApp>
        </TaskApps>
        <Clock>20:08<br />03.04.2022</Clock>
      </Taskbar>
    </Window>
  );
}
